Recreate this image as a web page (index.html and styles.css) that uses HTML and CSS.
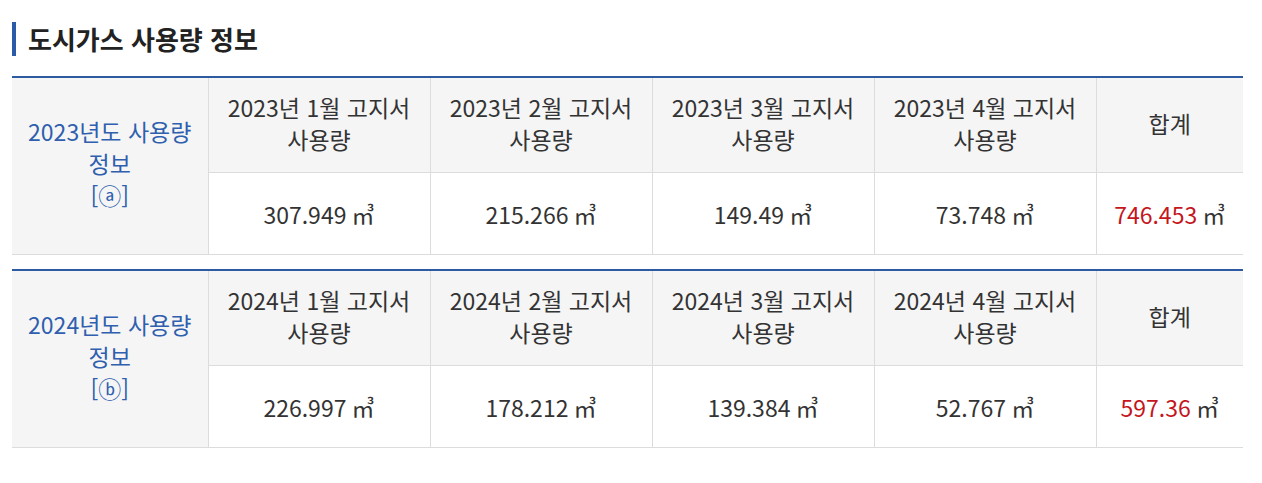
FILE: index.html
```html
<!DOCTYPE html>
<html lang="ko">
<head>
<meta charset="utf-8">
<title>도시가스 사용량 정보</title>
<link rel="stylesheet" href="styles.css">
</head>
<body>
<div class="page">
  <h2 class="title">도시가스 사용량 정보</h2>
  <table class="usage">
    <colgroup>
      <col class="c-year"><col class="c-m"><col class="c-m"><col class="c-m"><col class="c-m"><col class="c-sum">
    </colgroup>
    <tr class="head">
      <th rowspan="2" class="year">2023년도 사용량<br>정보<br>[ⓐ]</th>
      <th>2023년 1월 고지서<br>사용량</th>
      <th>2023년 2월 고지서<br>사용량</th>
      <th>2023년 3월 고지서<br>사용량</th>
      <th>2023년 4월 고지서<br>사용량</th>
      <th>합계</th>
    </tr>
    <tr class="data">
      <td>307.949 ㎥</td>
      <td>215.266 ㎥</td>
      <td>149.49 ㎥</td>
      <td>73.748 ㎥</td>
      <td><span class="total">746.453</span> ㎥</td>
    </tr>
  </table>
  <table class="usage">
    <colgroup>
      <col class="c-year"><col class="c-m"><col class="c-m"><col class="c-m"><col class="c-m"><col class="c-sum">
    </colgroup>
    <tr class="head">
      <th rowspan="2" class="year">2024년도 사용량<br>정보<br>[ⓑ]</th>
      <th>2024년 1월 고지서<br>사용량</th>
      <th>2024년 2월 고지서<br>사용량</th>
      <th>2024년 3월 고지서<br>사용량</th>
      <th>2024년 4월 고지서<br>사용량</th>
      <th>합계</th>
    </tr>
    <tr class="data">
      <td>226.997 ㎥</td>
      <td>178.212 ㎥</td>
      <td>139.384 ㎥</td>
      <td>52.767 ㎥</td>
      <td><span class="total">597.36</span> ㎥</td>
    </tr>
  </table>
</div>
</body>
</html>
```
FILE: styles.css
```css
html, body {
  margin: 0;
  padding: 0;
  background: #fff;
}
body {
  font-family: "Noto Sans CJK KR", "Noto Sans", sans-serif;
  color: #333;
}
.page {
  padding: 22px 19px 0 12px;
}
.title {
  margin: 0 0 20px 0;
  padding-left: 12px;
  border-left: 4px solid #2b5ba8;
  font-size: 26px;
  font-weight: 700;
  line-height: 34px;
  color: #222;
}
.usage {
  width: 1231px;
  border-collapse: collapse;
  table-layout: fixed;
  border-top: 2px solid #2d5aa0;
  margin-bottom: 14px;
}
.c-year { width: 196px; }
.c-m { width: 222px; }
.c-sum { width: 147px; }
.usage th, .usage td {
  font-weight: 400;
  font-size: 23px;
  line-height: 32px;
  text-align: center;
  border-bottom: 1px solid #dcdcdc;
  border-left: 1px solid #dcdcdc;
  padding: 0 2px;
}
.usage th:first-child { border-left: none; }
.head th {
  background: #f5f5f5;
  height: 90px;
  color: #333;
  padding-bottom: 4px;
}
.usage th.year {
  color: #2f5fae;
  padding-bottom: 6px;
}
.data td {
  height: 81px;
  background: #fff;
  color: #333;
}
.total { color: #c4161c; }
```
